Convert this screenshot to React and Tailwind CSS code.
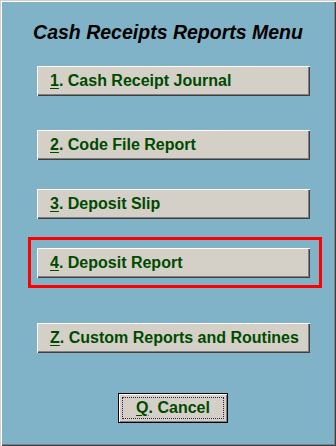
import React from 'react';

const bevel =
  'shadow-[inset_1px_1px_0_#ffffff,inset_-1px_-1px_0_#404040,inset_-2px_-2px_0_#808080]';

const MenuButton = ({ hotkey, label }) => (
  <button
    className={`flex items-center w-[273px] h-[30px] pl-[13px] bg-[#d4d0c8] ${bevel} text-[16px] font-bold text-[#004a00] text-left`}
  >
    <span className="underline underline-offset-2 decoration-1">{hotkey}</span>
    <span>. {label}</span>
  </button>
);

export default function App() {
  return (
    <div
      className="w-[336px] h-[446px] bg-[#80b3c7] flex flex-col shadow-[inset_1px_1px_0_#d4d0c8,inset_2px_2px_0_#ffffff,inset_-1px_-1px_0_#404040,inset_-2px_-2px_0_#808080]"
      style={{ fontFamily: '"Liberation Sans", Arial, sans-serif' }}
    >
      <h1 className="pt-[20px] text-center text-[19.5px] leading-[24px] font-bold italic text-black">
        Cash Receipts Reports Menu
      </h1>

      <div className="mt-[22px] ml-[37px]">
        <MenuButton hotkey="1" label="Cash Receipt Journal" />
      </div>
      <div className="mt-[34px] ml-[37px]">
        <MenuButton hotkey="2" label="Code File Report" />
      </div>
      <div className="mt-[29px] ml-[37px]">
        <MenuButton hotkey="3" label="Deposit Slip" />
      </div>

      {/* highlighted item */}
      <div className="mt-[18px] ml-[28px] w-[294px] border-[3px] border-[#ff0000] pt-[8px] pb-[7px] pl-[6px]">
        <MenuButton hotkey="4" label="Deposit Report" />
      </div>

      <div className="mt-[35px] ml-[37px]">
        <MenuButton hotkey="Z" label="Custom Reports and Routines" />
      </div>

      <div className="mt-[40px] ml-[118px]">
        <button className="w-[110px] h-[30px] border border-black bg-[#d4d0c8] shadow-[inset_1px_1px_0_#ffffff,inset_-1px_-1px_0_#808080] p-[3px]">
          <span className="flex items-center justify-center w-full h-full border border-dotted border-[#3a1a4a] text-[16px] font-bold text-[#004a00]">
            <span className="underline underline-offset-2 decoration-1">Q</span>
            <span>. Cancel</span>
          </span>
        </button>
      </div>
    </div>
  );
}
